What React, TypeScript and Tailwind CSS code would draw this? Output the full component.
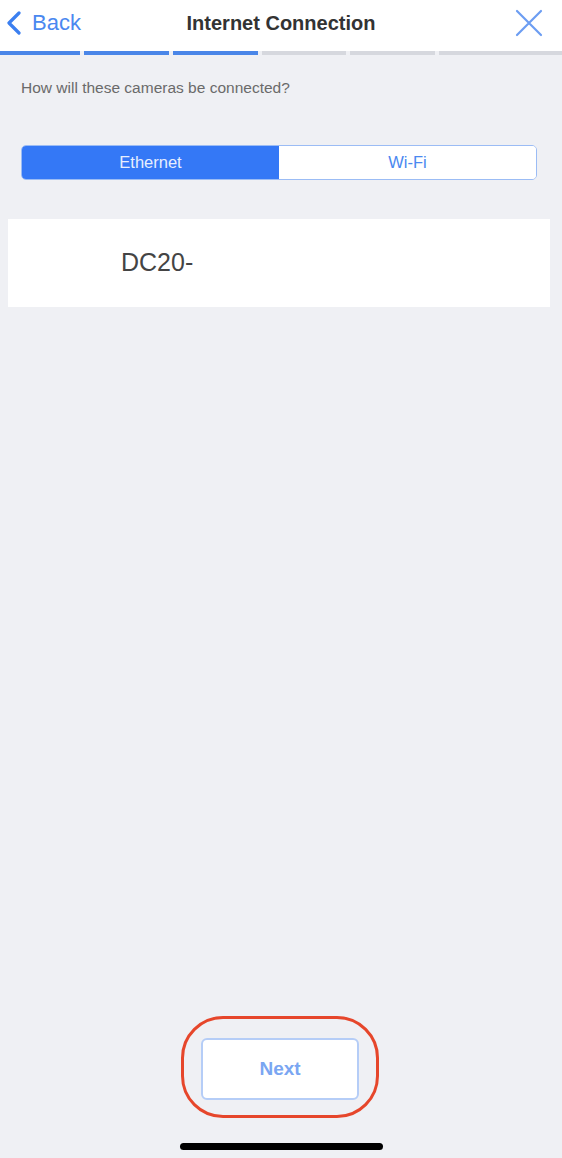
import { useState } from "react";

const font = { fontFamily: '"Helvetica Neue", "Liberation Sans", Arial, sans-serif' };

const App = () => {
  const [mode, setMode] = useState<"ethernet" | "wifi">("ethernet");

  return (
    <div
      className="w-[562px] h-[1158px] bg-[#eff0f4] flex flex-col overflow-hidden font-['Liberation_Sans',Arial,sans-serif]"
    >
      {/* header */}
      <div className="bg-white h-[51px] flex items-center justify-between px-[6px] pb-[5px] relative">
        <button className="flex items-center gap-[10px] text-[#4a88f0]">
          <svg width="16" height="24" viewBox="0 0 16 24" fill="none">
            <path d="M13 2 L3 12 L13 22" stroke="#3b7ff0" strokeWidth="3.2" strokeLinecap="round" strokeLinejoin="round" />
          </svg>
          <span className="text-[22px] leading-none">Back</span>
        </button>
        <h1 className="absolute left-0 right-0 top-[12px] text-center text-[20px] leading-[22px] font-bold text-[#333] pointer-events-none">
          Internet Connection
        </h1>
        <button className="mr-[12px]">
          <svg width="30" height="30" viewBox="0 0 30 30" fill="none">
            <path d="M3 3 L27 27 M27 3 L3 27" stroke="#6c9df2" strokeWidth="2.2" strokeLinecap="round" />
          </svg>
        </button>
      </div>

      {/* progress */}
      <div className="flex gap-[4px] h-[4px]">
        <div className="w-[80px] bg-[#4a86e8]" />
        <div className="w-[85px] bg-[#4a86e8]" />
        <div className="w-[85px] bg-[#4a86e8]" />
        <div className="w-[84px] bg-[#d6d8de]" />
        <div className="w-[85px] bg-[#d6d8de]" />
        <div className="flex-1 bg-[#d6d8de]" />
      </div>

      <p className="mt-[23px] ml-[21px] text-[15.5px] leading-[20px] text-[#6a6a6a]">
        How will these cameras be connected?
      </p>

      {/* segmented control */}
      <div className="mt-[47px] mx-[21px] mr-[25px] h-[35px] flex rounded-[5px] border border-[#9bbcf5] overflow-hidden">
        <button
          onClick={() => setMode("ethernet")}
          className={
            mode === "ethernet"
              ? "flex-1 bg-[#3478f6] text-[#e6eefe] text-[16.5px]"
              : "flex-1 bg-white text-[#4a88f0] text-[16.5px]"
          }
        >
          Ethernet
        </button>
        <button
          onClick={() => setMode("wifi")}
          className={
            mode === "wifi"
              ? "flex-1 bg-[#3478f6] text-[#e6eefe] text-[16.5px]"
              : "flex-1 bg-white text-[#4a88f0] text-[16.5px]"
          }
        >
          Wi-Fi
        </button>
      </div>

      {/* camera card */}
      <div className="mt-[39px] mx-[8px] mr-[12px] h-[88px] bg-white flex items-center pl-[113px]">
        <span className="text-[25px] text-[#444]" style={font}>
          DC20-
        </span>
      </div>

      <div className="flex-1" />

      {/* next */}
      <div className="flex justify-center">
        <div className="w-[198px] h-[102px] rounded-[42px] border-[3px] border-[#e6462b] flex items-start justify-center pt-[19px] ml-[-2px]">
          <button className="w-[158px] h-[62px] rounded-[6px] border-2 border-[#b5cdf7] bg-white text-[19px] font-bold text-[#7aa6f2]">
            Next
          </button>
        </div>
      </div>

      <div className="flex justify-center mt-[25px] mb-[8px]">
        <div className="w-[203px] h-[7px] rounded-full bg-black" />
      </div>
    </div>
  );
};

export default App;
